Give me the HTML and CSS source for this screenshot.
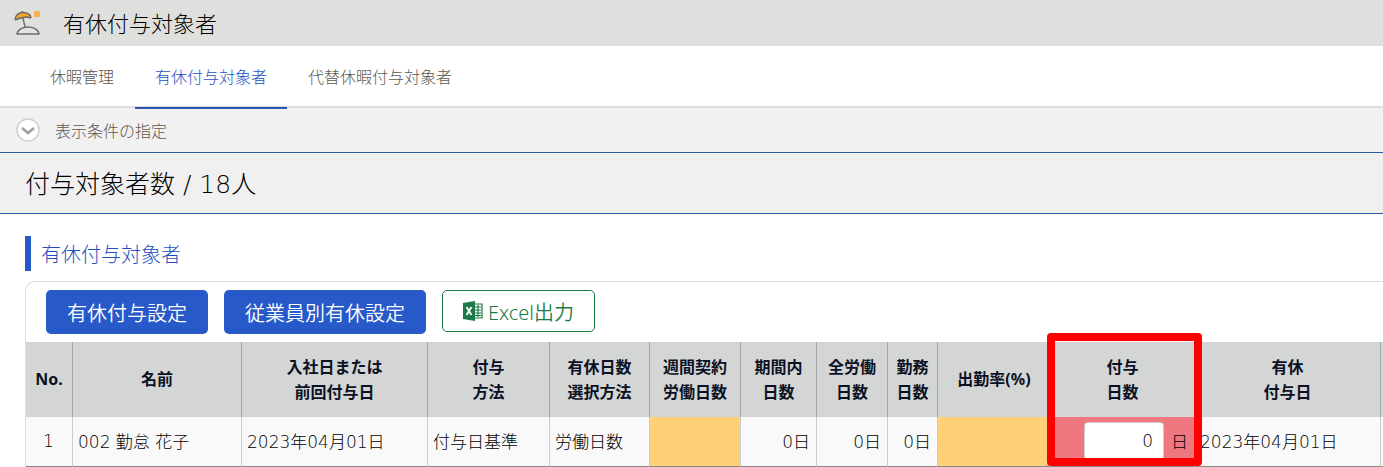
FILE: index.html
```html
<!DOCTYPE html>
<html lang="ja">
<head>
    <meta charset="UTF-8">
    <meta name="viewport" content="width=device-width, initial-scale=1.0">
    <title>有休付与対象者</title>
    <link rel="stylesheet" href="styles.css">
</head>
<body>
    <header class="page-header">
        <svg class="page-icon" viewBox="0 0 28 26" aria-hidden="true">
            <path d="M1 10C1 5 5 2.500 9 2.500c5 0 8 2.500 8 5.500l-4-1-4 1-4 1z" fill="#f6a623"/>
            <path d="M1 10C1 5 5 2.500 9 2.500c5 0 8 2.500 8 5.500M1 10l4-1.500 4-1 4-.5 4 1M8 1v1.500M9 8l2 9" fill="none" stroke="#6b6b6b" stroke-width="1.400"/>
            <path d="M3 24c0-3 4-7 11-7s11 4 11 7z" fill="#e4e4e2" stroke="#6b6b6b" stroke-width="1.600" stroke-linejoin="round"/>
            <path d="M20 1h6v6h-6z" fill="#fbb14d"/>
        </svg>
        <h1>有休付与対象者</h1>
    </header>

    <nav class="tabs">
        <a href="#">休暇管理</a>
        <a href="#" class="active">有休付与対象者</a>
        <a href="#">代替休暇付与対象者</a>
    </nav>

    <button type="button" class="condition">
        <svg viewBox="0 0 24 24" aria-hidden="true">
            <circle cx="12" cy="12" r="11" fill="#fff" stroke="#cfcfcf" stroke-width="1.500"/>
            <path d="M6 10l6 5 6-5" fill="none" stroke="#a2a2a2" stroke-width="2.800"/>
        </svg>
        表示条件の指定
    </button>

    <div class="count">付与対象者数 / 18人</div>

    <main>
        <h2>有休付与対象者</h2>
        <div class="panel">
            <div class="actions">
                <button type="button" class="btn">有休付与設定</button>
                <button type="button" class="btn">従業員別有休設定</button>
                <button type="button" class="btn btn-excel">
                    <svg viewBox="0 0 20 20" aria-hidden="true">
                        <path d="M11 3h8v14h-8z" fill="#fff" stroke="#1c7a45" stroke-width="1.200"/>
                        <path d="M12 6h6M12 9h6M12 12h6M12 14.500h6M15 4v12" stroke="#1c7a45" stroke-width="1.200"/>
                        <path d="M0 2l12-2v20L0 18z" fill="#1c7a45"/>
                        <path d="M3.500 6l5 8M8.500 6l-5 8" stroke="#fff" stroke-width="1.800"/>
                    </svg>
                    Excel出力
                </button>
            </div>
            <table>
                <colgroup>
                    <col class="col-no">
                    <col class="col-name">
                    <col class="col-date">
                    <col class="col-method">
                    <col class="col-select">
                    <col class="col-week">
                    <col class="col-term">
                    <col class="col-all">
                    <col class="col-work">
                    <col class="col-rate">
                    <col class="col-grant">
                    <col class="col-date">
                    <col class="col-next">
                </colgroup>
                <thead>
                    <tr>
                        <th>No.</th>
                        <th>名前</th>
                        <th>入社日または<br>前回付与日</th>
                        <th>付与<br>方法</th>
                        <th>有休日数<br>選択方法</th>
                        <th>週間契約<br>労働日数</th>
                        <th>期間内<br>日数</th>
                        <th>全労働<br>日数</th>
                        <th>勤務<br>日数</th>
                        <th>出勤率(%)</th>
                        <th class="marked" id="grant-days">付与<br>日数<span class="marker"></span></th>
                        <th>有休<br>付与日</th>
                        <th></th>
                    </tr>
                </thead>
                <tbody>
                    <tr>
                        <td class="center">1</td>
                        <td>002 勤怠 花子</td>
                        <td>2023年04月01日</td>
                        <td>付与日基準</td>
                        <td>労働日数</td>
                        <td class="warn"></td>
                        <td class="right">0日</td>
                        <td class="right">0日</td>
                        <td class="right">0日</td>
                        <td class="warn"></td>
                        <td class="error"><div class="days"><input type="text" value="0" aria-labelledby="grant-days">日</div></td>
                        <td>2023年04月01日</td>
                        <td></td>
                    </tr>
                </tbody>
            </table>
        </div>
    </main>
</body>
</html>
```

FILE: styles.css
```css
* {
    box-sizing: border-box;
}
body {
    margin: 0;
    overflow-x: hidden;
    background-color: #fff;
    color: #000;
    font-family: "DejaVu Sans", "Noto Sans CJK JP", sans-serif;
    font-size: 17px;
    font-weight: 300;
}
button, input {
    font: inherit;
    color: inherit;
}
h1, h2 {
    margin: 0;
    font-weight: 300;
}
.page-header {
    display: flex;
    align-items: center;
    gap: 21px;
    height: 46px;
    padding-left: 14px;
    background-color: #dfdfdd;
}
.page-icon {
    width: 28px;
    height: 26px;
}
h1 {
    padding-top: 3px;
    font-size: 22px;
    line-height: 43px;
}
.tabs {
    display: flex;
    gap: 1px;
    height: 62px;
    padding-left: 30px;
    border-bottom: 2px solid #ddd;
}
.tabs a {
    height: 63px;
    padding: 2px 20px 0;
    border-bottom: 2px solid transparent;
    color: #5c5850;
    font-size: 16px;
    line-height: 60px;
    text-decoration: none;
}
.tabs .active {
    border-bottom-color: #2b55b0;
    color: #1f50c0;
}
.condition {
    display: flex;
    align-items: center;
    gap: 15px;
    width: 100%;
    height: 44px;
    padding: 0 16px;
    border: 0;
    background-color: #f1f1f1;
    color: #5c5850;
    font-size: 16px;
}
.condition svg {
    width: 24px;
    height: 24px;
}
.count {
    padding: 4px 0 0 25px;
    border-top: 1px solid #2b59a8;
    border-bottom: 1px solid #2b59a8;
    background-color: #f1f0f0;
    font-size: 25px;
    line-height: 56px;
}
main {
    padding: 22px 0 0 25px;
}
h2 {
    padding: 3px 0 0 10px;
    border-left: 6px solid #2759c8;
    color: #1f50c0;
    font-size: 20px;
    line-height: 32px;
}
.panel {
    margin-top: 10px;
    border-top: 1px solid #ddd;
    border-left: 1px solid #ddd;
    border-top-left-radius: 10px;
}
.actions {
    display: flex;
    align-items: flex-start;
    gap: 16px;
    padding: 8px 20px;
}
.btn {
    height: 44px;
    padding: 0 21px;
    border: 0;
    border-radius: 5px;
    background-color: #2759c8;
    color: #fff;
    font-family: "Noto Sans", "Noto Sans CJK JP", sans-serif;
    font-size: 20px;
    font-weight: 350;
}
.btn-excel {
    display: flex;
    align-items: center;
    gap: 5px;
    height: 42px;
    padding: 0 20px;
    border: 1px solid #1c7a45;
    background-color: #fff;
    color: #1c7a45;
}
.btn-excel svg {
    width: 20px;
    height: 20px;
}
table {
    width: 1400px;
    table-layout: fixed;
    border-collapse: separate;
    border-spacing: 0;
}
th {
    height: 75px;
    padding: 0;
    border-right: 1px solid #a5a7a6;
    background-color: #d4d6d5;
    color: #0b1124;
    font-family: "Noto Sans", "Noto Sans CJK JP", sans-serif;
    font-size: 16px;
    font-weight: 700;
    line-height: 25px;
}
td {
    height: 50px;
    padding: 0 6px 2px 5px;
    border-right: 1px solid #ccc;
    border-bottom: 1px solid #888;
    background-color: #f9f9f9;
    white-space: nowrap;
}
.center {
    text-align: center;
}
.right {
    text-align: right;
}
.warn {
    background-color: #ffd078;
}
.error {
    background-color: #ef7880;
}
.days {
    display: flex;
    align-items: center;
    justify-content: flex-end;
    gap: 7px;
}
.days input {
    width: 80px;
    height: 38px;
    padding: 0 10px;
    border: 1px solid #ccc;
    border-radius: 4px;
    background-color: #fff;
    text-align: right;
}
.marked {
    position: relative;
}
/* red frame over the header cell and the input below it */
.marker {
    position: absolute;
    top: -9px;
    left: -4px;
    right: -8px;
    height: 133px;
    border: 8px solid #f00;
    border-radius: 4px;
}
.col-no { width: 47px; }
.col-name { width: 169px; }
.col-date { width: 186px; }
.col-method { width: 122px; }
.col-select { width: 100px; }
.col-week { width: 91px; }
.col-term { width: 76px; }
.col-all { width: 71px; }
.col-work { width: 50px; }
.col-rate { width: 113px; }
.col-grant { width: 144px; }
```
